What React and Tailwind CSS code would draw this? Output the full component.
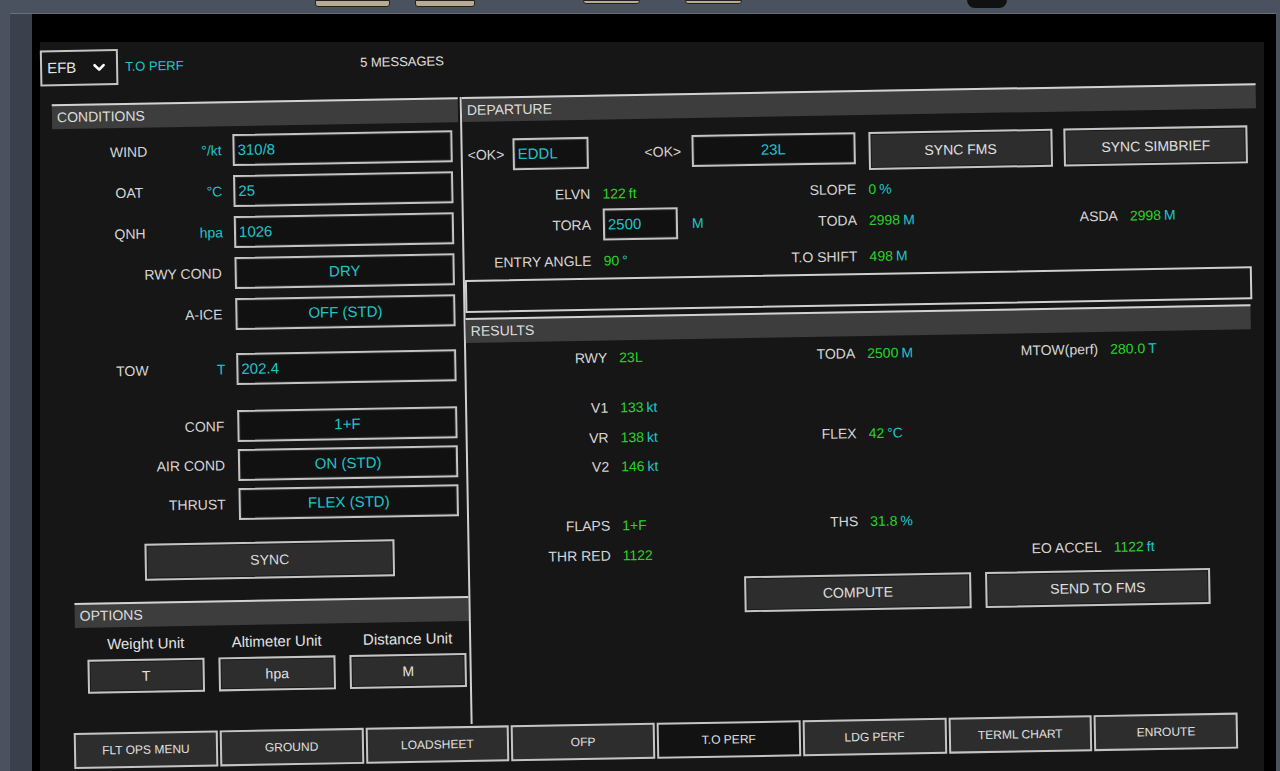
import React from 'react'
import { ChevronDown } from 'lucide-react'

const CY = 'text-[#1dc6ca]'
const GR = 'text-[#27d327]'
const BOX = 'border-2 border-[#c4c4c4] bg-[#111111] shadow-[inset_0_0_0_1px_#2c2c2c]'
const BTN = 'border-2 border-[#c4c4c4] bg-[#2d2d2d] shadow-[inset_0_0_0_1px_#1a1a1a]'

function Header({ children }) {
  return (
    <div className="flex h-[25px] items-center border-t-2 border-[#d2d2d2] bg-[#3d3d3d] pl-[5px] text-[14px] text-[#dedede]">
      {children}
    </div>
  )
}

function CondRow({ label, unit, value, center, className = 'mt-[9px]' }) {
  return (
    <div className={`flex h-8 items-center ${className}`}>
      {unit !== undefined ? (
        <div className="flex w-[180px] items-center">
          <span className="ml-[16px] w-[120px] text-center">{label}</span>
          <span className={`flex-1 pr-[11px] text-right ${CY}`}>{unit}</span>
        </div>
      ) : (
        <div className="w-[180px] pr-[13px] text-right">{label}</div>
      )}
      <div className={`flex h-8 w-[220px] items-center text-[15px] ${BOX} ${CY} ${center ? 'justify-center' : 'pl-[3px]'}`}>
        {value}
      </div>
    </div>
  )
}

function Pair({ label, lw, children }) {
  return (
    <div className="flex items-center gap-3">
      <span className={`text-right ${lw}`}>{label}</span>
      {children}
    </div>
  )
}

function Val({ n, u, allGreen }) {
  return (
    <span className="whitespace-nowrap">
      <span className={GR}>{n}</span>
      {u && <span className={`ml-[3px] ${allGreen ? GR : CY}`}>{u}</span>}
    </span>
  )
}

const NAV = ['FLT OPS MENU', 'GROUND', 'LOADSHEET', 'OFP', 'T.O PERF', 'LDG PERF', 'TERML CHART', 'ENROUTE']

export default function App() {
  return (
    <div className="h-[771px] w-[1280px] overflow-hidden bg-[#4a525f] pl-[10px] pr-[4px] pt-[14px] font-['Liberation_Sans',Arial,sans-serif] text-[14px] text-[#d6d6d6]">
      {/* top frame pieces of the cockpit panel */}
      <div className="-mt-[14px] flex h-[14px] items-start border-b border-[#66707e]">
        <div className="ml-[305px] h-[7px] w-[75px] rounded-b-[3px] border border-[#222] bg-[#b9ab92]" />
        <div className="ml-[25px] h-[7px] w-[60px] rounded-b-[3px] border border-[#222] bg-[#b9ab92]" />
        <div className="ml-[108px] h-[4px] w-[57px] rounded-b-[3px] border border-[#222] bg-[#b9ab92]" />
        <div className="ml-[45px] h-[4px] w-[57px] rounded-b-[3px] border border-[#222] bg-[#b9ab92]" />
        <div className="ml-[225px] h-[8px] w-[40px] rounded-b-full bg-[#111]" />
      </div>

      <div className="h-full border-l-[22px] border-[#3a414c] bg-black pl-[8px] pr-[12px] pt-[28px]">
        <div className="relative h-full bg-[#161616]">
          <div className="absolute inset-0 -mt-[2px] flex origin-[600px_360px] -rotate-1 flex-col">
            {/* top bar */}
            <div className="flex h-9 items-center pl-[6px]">
              <div className="flex h-9 w-[78px] items-center justify-between border-2 border-[#c4c4c4] px-[5px] text-[15px] text-[#e4e4e4]">
                EFB
                <ChevronDown size={18} strokeWidth={3.5} className="mr-[3px] text-white" />
              </div>
              <div className={`ml-[7px] w-[235px] text-[13px] ${CY}`}>T.O PERF</div>
              <div className="text-[13px] text-[#e0e0e0]">5 MESSAGES</div>
            </div>

            {/* main */}
            <div className="ml-[17px] mt-[18px] flex h-[627px]">
              {/* left column */}
              <div className="w-[408px]">
                <div className="w-[406px]">
                  <Header>CONDITIONS</Header>
                </div>
                <CondRow label="WIND" unit="°/kt" value="310/8" className="mt-[8px]" />
                <CondRow label="OAT" unit="°C" value="25" />
                <CondRow label="QNH" unit="hpa" value="1026" />
                <CondRow label="RWY COND" value="DRY" center />
                <CondRow label="A-ICE" value="OFF (STD)" center />
                <CondRow label="TOW" unit="T" value="202.4" className="mt-[23px]" />
                <CondRow label="CONF" value="1+F" center className="mt-[25px]" />
                <CondRow label="AIR COND" value="ON (STD)" center className="mt-[7px]" />
                <CondRow label="THRUST" value="FLEX (STD)" center className="mt-[7px]" />
                <div className={`ml-[85px] mt-[22px] flex h-[37px] w-[250px] items-center justify-center text-[14px] text-[#dcdcdc] ${BTN}`}>
                  SYNC
                </div>

                <div className="ml-[14px] mt-[21px] w-[394px]">
                  <Header>OPTIONS</Header>
                  <div className="ml-[12px] mt-[8px] flex gap-[14px]">
                    {[
                      ['Weight Unit', 'T'],
                      ['Altimeter Unit', 'hpa'],
                      ['Distance Unit', 'M'],
                    ].map(([l, v]) => (
                      <div key={l} className="w-[117px]">
                        <div className="h-[18px] text-center text-[15px] leading-[18px] text-[#e2e2e2]">{l}</div>
                        <div className={`mt-[6px] flex h-[34px] items-center justify-center text-[14px] text-[#e2e2e2] ${BTN}`}>{v}</div>
                      </div>
                    ))}
                  </div>
                </div>
              </div>

              {/* right column */}
              <div className="w-[787px] border-l-2 border-[#cfcfcf]">
                <div className="mr-[-9px]">
                  <Header>DEPARTURE</Header>
                </div>
                <div className="mt-[17px] flex items-start">
                  <div className="flex h-8 w-[50px] items-center pl-[5px]">&lt;OK&gt;</div>
                  <div className={`flex h-8 w-[76px] items-center pl-[3px] text-[15px] ${BOX} ${CY}`}>EDDL</div>
                  <div className="flex h-8 w-[103px] items-center pl-[56px]">&lt;OK&gt;</div>
                  <div className={`flex h-8 w-[164px] items-center justify-center text-[15px] ${BOX} ${CY}`}>23L</div>
                  <div className={`ml-[13px] flex h-[38px] w-[185px] items-center justify-center text-[14px] text-[#e0e0e0] ${BTN}`}>SYNC FMS</div>
                  <div className={`ml-[11px] flex h-[38px] w-[184px] items-center justify-center text-[14px] text-[#e0e0e0] ${BTN}`}>SYNC SIMBRIEF</div>
                </div>

                <div className="mt-[8px] grid grid-cols-[264px_261px_1fr] grid-rows-[22px_32px_32px] items-center gap-y-1">
                  <Pair label="ELVN" lw="w-[127px]"><Val n="122" u="ft" allGreen /></Pair>
                  <Pair label="SLOPE" lw="w-[129px]"><Val n="0" u="%" /></Pair>
                  <div />
                  <Pair label="TORA" lw="w-[127px]">
                    <div className={`flex h-8 w-[75px] items-center pl-[3px] text-[15px] ${BOX} ${CY}`}>2500</div>
                    <span className={`ml-[2px] ${CY}`}>M</span>
                  </Pair>
                  <Pair label="TODA" lw="w-[129px]"><Val n="2998" u="M" /></Pair>
                  <Pair label="ASDA" lw="w-[129px]"><Val n="2998" u="M" /></Pair>
                  <Pair label="ENTRY ANGLE" lw="w-[127px]"><Val n="90" u="°" /></Pair>
                  <Pair label="T.O SHIFT" lw="w-[129px]"><Val n="498" u="M" /></Pair>
                  <div />
                </div>

                <div className="mr-[-2px] mt-[1px] h-[33px] border-2 border-[#cfcfcf]" />

                <div className="mt-[5px]">
                  <Header>RESULTS</Header>
                </div>

                <div className="mt-[7px] grid h-5 grid-cols-[254px_243px_1fr] items-center">
                  <Pair label="RWY" lw="w-[141px]"><span className={GR}>23L</span></Pair>
                  <Pair label="TODA" lw="w-[135px]"><Val n="2500" u="M" /></Pair>
                  <Pair label="MTOW(perf)" lw="w-[135px]"><Val n="280.0" u="T" /></Pair>
                </div>
                <div className="mt-[30px] grid h-5 grid-cols-[254px_243px_1fr] items-center">
                  <Pair label="V1" lw="w-[141px]"><Val n="133" u="kt" /></Pair>
                </div>
                <div className="mt-[10px] grid h-5 grid-cols-[254px_243px_1fr] items-center">
                  <Pair label="VR" lw="w-[141px]"><Val n="138" u="kt" /></Pair>
                  <Pair label="FLEX" lw="w-[135px]"><Val n="42" u="°C" /></Pair>
                </div>
                <div className="mt-[9px] grid h-5 grid-cols-[254px_243px_1fr] items-center">
                  <Pair label="V2" lw="w-[141px]"><Val n="146" u="kt" /></Pair>
                </div>
                <div className="mt-[39px] grid h-5 grid-cols-[254px_243px_1fr] items-center">
                  <Pair label="FLAPS" lw="w-[141px]"><span className={GR}>1+F</span></Pair>
                  <Pair label="THS" lw="w-[135px]"><Val n="31.8" u="%" /></Pair>
                </div>
                <div className="mt-[10px] grid h-5 grid-cols-[254px_243px_1fr] items-center">
                  <Pair label="THR RED" lw="w-[141px]"><span className={GR}>1122</span></Pair>
                  <div />
                  <Pair label="EO ACCEL" lw="w-[135px]"><Val n="1122" u="ft" /></Pair>
                </div>

                <div className="ml-[274px] mt-[13px] flex gap-[14px]">
                  <div className={`flex h-9 w-[227px] items-center justify-center text-[14px] text-[#e0e0e0] ${BTN}`}>COMPUTE</div>
                  <div className={`flex h-9 w-[225px] items-center justify-center text-[14px] text-[#e0e0e0] ${BTN}`}>SEND TO FMS</div>
                </div>
              </div>
            </div>

            {/* bottom navigation */}
            <div className="ml-[28px] mt-[2px] grid w-[1164px] grid-cols-8 gap-[2px]">
              {NAV.map((n) => (
                <div
                  key={n}
                  className={`flex h-9 items-center justify-center border-2 border-[#c4c4c4] text-[12px] text-[#e0e0e0] ${n === 'T.O PERF' ? 'bg-[#121212]' : 'bg-[#2d2d2d]'}`}
                >
                  {n}
                </div>
              ))}
            </div>
          </div>
        </div>
      </div>
    </div>
  )
}
